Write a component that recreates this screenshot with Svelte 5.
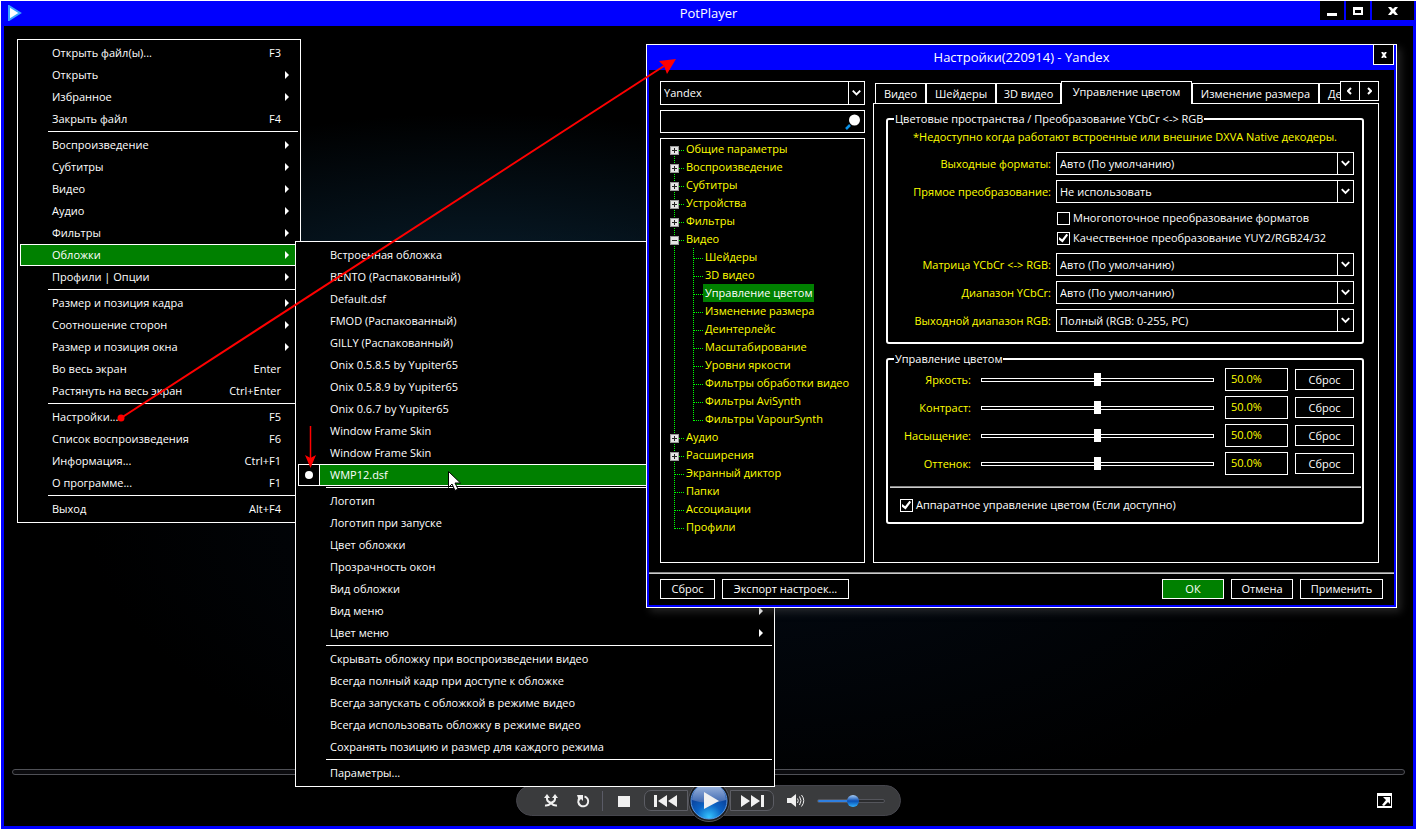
<script>
    const mainMenu = [
        { label: 'Открыть файл(ы)...', key: 'F3' },
        { label: 'Открыть', sub: true },
        { label: 'Избранное', sub: true },
        { label: 'Закрыть файл', key: 'F4' },
        { sep: true },
        { label: 'Воспроизведение', sub: true },
        { label: 'Субтитры', sub: true },
        { label: 'Видео', sub: true },
        { label: 'Аудио', sub: true },
        { label: 'Фильтры', sub: true },
        { label: 'Обложки', sub: true, active: true },
        { label: 'Профили | Опции', sub: true },
        { sep: true },
        { label: 'Размер и позиция кадра', sub: true },
        { label: 'Соотношение сторон', sub: true },
        { label: 'Размер и позиция окна', sub: true },
        { label: 'Во весь экран', key: 'Enter' },
        { label: 'Растянуть на весь экран', key: 'Ctrl+Enter' },
        { sep: true },
        { label: 'Настройки...', key: 'F5' },
        { label: 'Список воспроизведения', key: 'F6' },
        { label: 'Информация...', key: 'Ctrl+F1' },
        { label: 'О программе...', key: 'F1' },
        { sep: true },
        { label: 'Выход', key: 'Alt+F4' }
    ];

    const skinMenu = [
        { label: 'Встроенная обложка' },
        { label: 'BENTO (Распакованный)' },
        { label: 'Default.dsf' },
        { label: 'FMOD (Распакованный)' },
        { label: 'GILLY (Распакованный)' },
        { label: 'Onix 0.5.8.5 by Yupiter65' },
        { label: 'Onix 0.5.8.9 by Yupiter65' },
        { label: 'Onix 0.6.7 by Yupiter65' },
        { label: 'Window Frame Skin' },
        { label: 'Window Frame Skin' },
        { label: 'WMP12.dsf', active: true, checked: true },
        { sep: true },
        { label: 'Логотип', sub: true },
        { label: 'Логотип при запуске', sub: true },
        { label: 'Цвет обложки', sub: true },
        { label: 'Прозрачность окон', sub: true },
        { label: 'Вид обложки', sub: true },
        { label: 'Вид меню', sub: true },
        { label: 'Цвет меню', sub: true },
        { sep: true },
        { label: 'Скрывать обложку при воспроизведении видео' },
        { label: 'Всегда полный кадр при доступе к обложке' },
        { label: 'Всегда запускать с обложкой в режиме видео' },
        { label: 'Всегда использовать обложку в режиме видео' },
        { label: 'Сохранять позицию и размер для каждого режима' },
        { sep: true },
        { label: 'Параметры...' }
    ];

    const tree = [
        { label: 'Общие параметры', box: '+', first: true },
        { label: 'Воспроизведение', box: '+' },
        { label: 'Субтитры', box: '+' },
        { label: 'Устройства', box: '+' },
        { label: 'Фильтры', box: '+' },
        { label: 'Видео', box: '-' },
        { label: 'Шейдеры', child: true },
        { label: '3D видео', child: true },
        { label: 'Управление цветом', child: true },
        { label: 'Изменение размера', child: true },
        { label: 'Деинтерлейс', child: true },
        { label: 'Масштабирование', child: true },
        { label: 'Уровни яркости', child: true },
        { label: 'Фильтры обработки видео', child: true },
        { label: 'Фильтры AviSynth', child: true },
        { label: 'Фильтры VapourSynth', child: true, last: true },
        { label: 'Аудио', box: '+' },
        { label: 'Расширения', box: '+' },
        { label: 'Экранный диктор' },
        { label: 'Папки' },
        { label: 'Ассоциации' },
        { label: 'Профили', last: true }
    ];

    const tabs = ['Видео', 'Шейдеры', '3D видео', 'Управление цветом', 'Изменение размера', 'Деинтерлейс'];
    let activeTab = $state('Управление цветом');

    let sliders = $state([
        { id: 'brightness', label: 'Яркость:', value: 50 },
        { id: 'contrast', label: 'Контраст:', value: 50 },
        { id: 'saturation', label: 'Насыщение:', value: 50 },
        { id: 'hue', label: 'Оттенок:', value: 50 }
    ]);
</script>

{#snippet menuItems(items)}
    {#each items as item}
        {#if item.sep}
            <li class="sep" role="separator"></li>
        {:else}
            <li>
                <button class="item" class:active={item.active}>
                    <span class="mark" class:checked={item.checked}></span>
                    <span class="label">{item.label}</span>
                    {#if item.key}<span class="key">{item.key}</span>{/if}
                    {#if item.sub}<svg class="more" viewBox="0 0 4 8"><path d="M0 0L4 4L0 8Z" /></svg>{/if}
                </button>
            </li>
        {/if}
    {/each}
{/snippet}

{#snippet dropdown(id, value)}
    <div class="select">
        <select {id} aria-label={value}><option>{value}</option></select>
        <svg viewBox="0 0 16 21"><path d="M4 8L8 12L12 8" /></svg>
    </div>
{/snippet}

<div class="player">
    <header class="titlebar">
        <svg class="logo" viewBox="0 0 14 16"><path d="M1 1L12 8L1 15Z" /></svg>
        <h1>PotPlayer</h1>
        <div class="window-buttons">
            <button aria-label="Свернуть"><svg viewBox="0 0 12 12"><path d="M1 8H11V11H1Z" /></svg></button>
            <button aria-label="Развернуть"><svg viewBox="0 0 12 12"><path fill-rule="evenodd" d="M1 2H11V10H1ZM3 5V8H9V5Z" /></svg></button>
            <button class="wide" aria-label="Закрыть"><svg viewBox="0 0 12 12"><path d="M1 2H4L6 4L8 2H11L8 6L11 10H8L6 8L4 10H1L4 6Z" /></svg></button>
        </div>
    </header>

    <main class="screen"></main>

    <footer>
        <div class="seek"></div>
        <div class="controls">
            <div class="pill">
                <button aria-label="Случайный порядок">
                    <svg width="14" height="13" viewBox="0 0 14 13"><path class="stroke" d="M3 3V5C3 8 6 8 7 9S9 12 13 11.5M11 3V5C11 8 8 8 7 9S5 12 1 11.5" /><path d="M0 4L3 0L6 4ZM8 4L11 0L14 4Z" /></svg>
                </button>
                <button aria-label="Повтор">
                    <svg width="14" height="14" viewBox="0 0 14 14"><path class="stroke" d="M8.5 2.5A5 5 0 1 1 3.5 4" /><path d="M1 1H7V7L5 5L3 7Z" /></svg>
                </button>
                <span class="divider"></span>
                <button class="stop" aria-label="Стоп">
                    <svg width="12" height="12" viewBox="0 0 12 12"><path d="M0 1H12V12H0Z" /></svg>
                </button>
                <button class="skip prev" aria-label="Назад">
                    <svg width="24" height="12" viewBox="0 0 24 12"><path d="M0 0H3V12H0ZM13 0V12L4 6ZM23 0V12L14 6Z" /></svg>
                </button>
                <button class="play" aria-label="Воспроизвести">
                    <svg width="42" height="42" viewBox="0 0 42 42">
                        <defs>
                            <radialGradient id="orb" cx="50%" cy="95%" r="80%">
                                <stop offset="0" stop-color="#35c5ff" />
                                <stop offset=".45" stop-color="#0b63c4" />
                                <stop offset="1" stop-color="#0a3288" />
                            </radialGradient>
                            <linearGradient id="gloss" x2="0" y2="1">
                                <stop offset="0" stop-color="#a9bfe2" />
                                <stop offset="1" stop-color="#3b66b0" />
                            </linearGradient>
                        </defs>
                        <circle cx="21" cy="21" r="20.5" fill="#191a1d" stroke="#55565c" />
                        <circle cx="21" cy="21" r="18" fill="url(#orb)" stroke="#5e9be6" />
                        <path d="M4 20A17 17 0 0 1 38 20Q21 26 4 20Z" fill="url(#gloss)" />
                        <path d="M16 12L31 21L16 29Z" />
                    </svg>
                </button>
                <button class="skip next" aria-label="Вперёд">
                    <svg width="24" height="12" viewBox="0 0 24 12"><path d="M24 0H21V12H24ZM11 0V12L20 6ZM1 0V12L10 6Z" /></svg>
                </button>
                <button class="sound" aria-label="Звук">
                    <svg width="18" height="14" viewBox="0 0 18 14"><path d="M0 4H4L9 0V13L4 9H0Z" /><path class="stroke" d="M10.5 4.5Q12 6.5 10.5 9M12.5 2.5Q15.5 6.5 12.5 11M14.5 1Q19 6.5 14.5 12.5" /></svg>
                </button>
                <input class="volume" type="range" aria-label="Громкость" value="53" />
            </div>
            <button class="popout" aria-label="Переключить режим">
                <svg width="15" height="15" viewBox="0 0 15 15"><path fill-rule="evenodd" d="M0 0H15V15H0ZM1 3V13H14V3Z" /><path d="M6 4H13V11L11 9L7 13L5 12L9 7Z" /></svg>
            </button>
        </div>
    </footer>

    <ul class="menu main-menu">{@render menuItems(mainMenu)}</ul>
    <ul class="menu skin-menu">{@render menuItems(skinMenu)}</ul>

    <section class="dialog">
        <header>
            <h2>Настройки(220914) - Yandex</h2>
            <button class="close" aria-label="Закрыть настройки"><svg viewBox="0 0 6 6"><path d="M1 0L5 6M5 0L1 6" /></svg></button>
        </header>

        <div class="body">
            <aside>
                {@render dropdown('profile', 'Yandex')}
                <div class="search">
                    <input type="text" aria-label="Поиск" />
                    <svg width="16" height="16" viewBox="0 0 16 16"><path d="M1 15L5 11" stroke="#0a92e8" stroke-width="2.5" /><circle cx="9.5" cy="6" r="5.5" fill="#fff" /></svg>
                </div>
                <ul class="tree">
                    {#each tree as node}
                        <li>
                            <svg class="branch" width={node.child ? 42 : 23} height="18">
                                <path d="M13.5 {node.first ? 10 : 0}V{node.last && !node.child ? 11 : 18}" />
                                {#if node.child}
                                    <path d="M32.5 0V{node.last ? 11 : 18}M33 10.5H42" />
                                {:else}
                                    <path d="M14 10.5H23" />
                                {/if}
                                {#if node.box}
                                    <rect x="9.5" y="6.5" width="8" height="8" />
                                    <path class="sign" d={node.box === '+' ? 'M11 10.5H16M13.5 8V13' : 'M11 10.5H16'} />
                                {/if}
                            </svg>
                            <span class:selected={node.label === activeTab}>{node.label}</span>
                        </li>
                    {/each}
                </ul>
            </aside>

            <div class="page">
                <div class="tabs">
                    {#each tabs as tab}
                        <button class="tab" class:current={tab === activeTab} onclick={() => (activeTab = tab)}>{tab}</button>
                    {/each}
                    <div class="scroll">
                        <button aria-label="Предыдущие вкладки"><svg viewBox="0 0 6 8"><path d="M4 1L1 4L4 7" /></svg></button>
                        <button aria-label="Следующие вкладки"><svg viewBox="0 0 6 8"><path d="M2 1L5 4L2 7" /></svg></button>
                    </div>
                </div>

                <div class="panel">
                    <fieldset>
                        <legend>Цветовые пространства / Преобразование YCbCr &lt;-&gt; RGB</legend>
                        <p class="note">*Недоступно когда работают встроенные или внешние DXVA Native декодеры.</p>
                        <div class="form">
                            <label for="output">Выходные форматы:</label>
                            {@render dropdown('output', 'Авто (По умолчанию)')}
                            <label for="direct">Прямое преобразование:</label>
                            {@render dropdown('direct', 'Не использовать')}
                            <div class="checks">
                                <label class="check"><input type="checkbox" />Многопоточное преобразование форматов</label>
                                <label class="check"><input type="checkbox" checked />Качественное преобразование YUY2/RGB24/32</label>
                            </div>
                            <label for="matrix">Матрица YCbCr &lt;-&gt; RGB:</label>
                            {@render dropdown('matrix', 'Авто (По умолчанию)')}
                            <label for="range">Диапазон YCbCr:</label>
                            {@render dropdown('range', 'Авто (По умолчанию)')}
                            <label for="rgb">Выходной диапазон RGB:</label>
                            {@render dropdown('rgb', 'Полный (RGB: 0-255, PC)')}
                        </div>
                    </fieldset>

                    <fieldset>
                        <legend>Управление цветом</legend>
                        <div class="sliders">
                            {#each sliders as s}
                                <div class="slider">
                                    <label for={s.id}>{s.label}</label>
                                    <input type="range" id={s.id} bind:value={s.value} />
                                    <input type="text" aria-label={s.label} value="{s.value.toFixed(1)}%" />
                                    <button class="btn" onclick={() => (s.value = 50)}>Сброс</button>
                                </div>
                            {/each}
                        </div>
                        <hr />
                        <label class="check hardware"><input type="checkbox" checked />Аппаратное управление цветом (Если доступно)</label>
                    </fieldset>
                </div>
            </div>
        </div>

        <footer class="actions">
            <button class="btn reset">Сброс</button>
            <button class="btn export">Экспорт настроек...</button>
            <span class="spacer"></span>
            <button class="btn ok">ОК</button>
            <button class="btn">Отмена</button>
            <button class="btn apply">Применить</button>
        </footer>
    </section>

    <svg class="overlay" width="700" height="500" viewBox="0 0 700 500">
        <g class="arrows">
            <circle cx="121" cy="418" r="3.5" />
            <path d="M121 418L664 66" stroke="#f00" stroke-width="2" />
            <path d="M676 59L667 74L664 66L659 61Z" />
            <path d="M310.5 426V462" stroke="#f00" stroke-width="1.5" />
            <path d="M310.5 468L305 455L310.5 458L316 455Z" />
        </g>
        <path class="cursor" d="M448.5 471.5V487.5L452 484L455 490.5L458 489L455 483H460.5Z" />
    </svg>
</div>

<style>
:global(body) {
    background: #000;
}

.player {
    --line: #fff;
    --blue: #00f;
    --green: #008000;
    position: relative;
    display: flex;
    flex-direction: column;
    box-sizing: border-box;
    min-height: 100vh;
    border: 1px solid var(--line);
    background: #000;
    color: #fff;
    font: 11px/16px "Open Sans", "Noto Sans", sans-serif;
    overflow: hidden;
}

.player * {
    box-sizing: border-box;
}

button, input, select {
    margin: 0;
    padding: 0;
    border: 0;
    border-radius: 0;
    outline: 0;
    background: none;
    color: inherit;
    font: inherit;
}

svg {
    display: block;
    flex: none;
    fill: #fff;
}

ul, h1, h2, p {
    margin: 0;
    padding: 0;
    list-style: none;
    font-weight: normal;
}

/* player window */

.titlebar {
    display: grid;
    grid-template-columns: 1fr auto 1fr;
    height: 25px;
    padding: 0 2px;
    background: var(--blue);
}

.logo {
    width: 14px;
    height: 16px;
    margin: 4px 0 0 5px;
    stroke: #39a5ff;
    stroke-width: 2;
}

h1, h2 {
    font-size: 13px;
    line-height: 24px;
    text-align: center;
}

.window-buttons {
    display: flex;
    justify-content: flex-end;
    gap: 2px;
}

.window-buttons button {
    display: grid;
    place-items: center;
    width: 24px;
    height: 19px;
    background: #000;
}

.window-buttons .wide {
    width: 42px;
}

.window-buttons svg {
    width: 12px;
    height: 12px;
}

.screen {
    flex: 1;
    border: solid var(--blue);
    border-width: 0 3px;
    background:
        radial-gradient(ellipse 520px 210px at 34% 40%, #0a2436, transparent),
        radial-gradient(ellipse 650px 300px at 52% 66%, #030a14, #000);
}

.player > footer {
    padding-bottom: 10px;
    border: solid var(--blue);
    border-width: 0 3px 3px;
}

.seek {
    height: 6px;
    margin: 0 8px 10px;
    border: 1px solid #4f5056;
    border-radius: 3px;
    background: #0b0b0e;
}

.controls {
    display: grid;
    grid-template-columns: 1fr auto 1fr;
    align-items: center;
}

.pill {
    grid-column: 2;
    display: flex;
    align-items: center;
    height: 31px;
    padding: 0 15px 0 18px;
    border: 1px solid #45454c;
    border-radius: 16px;
    background: #3a3b3d;
}

.pill button {
    display: grid;
    place-items: center;
    width: 32px;
}

.pill svg {
    fill: #f0f0f0;
}

.pill .stroke {
    fill: none;
    stroke: #f0f0f0;
    stroke-width: 2;
}

.pill .sound .stroke {
    stroke-width: 1;
}

.divider {
    width: 1px;
    height: 20px;
    margin: 0 1px 0 3px;
    background: #5a5b66;
}

.pill .stop {
    width: 40px;
}

.pill .skip {
    width: 44px;
    height: 21px;
    border: 1px solid #5c5d64;
    background: #333436;
}

.pill .prev {
    border-radius: 7px 0 0 7px;
}

.pill .next {
    border-radius: 0 7px 7px 0;
}

.pill .play {
    width: 42px;
    margin: -6px 0;
}

.pill .sound {
    width: 43px;
}

.volume {
    appearance: none;
    width: 68px;
    height: 12px;
}

.volume::-webkit-slider-runnable-track {
    height: 4px;
    border: 1px solid #55565c;
    border-radius: 2px;
    background: linear-gradient(90deg, #2f7fe0 53%, #2b2c2e 53%);
}

.volume::-webkit-slider-thumb {
    appearance: none;
    width: 12px;
    height: 12px;
    margin-top: -5px;
    border-radius: 50%;
    background: linear-gradient(#a8cdf5, #0a4fb4 50%, #2fb1ff);
}

.popout {
    justify-self: end;
    margin-right: 21px;
}

/* menus */

.menu {
    position: absolute;
    padding: 2px;
    border: 1px solid var(--line);
    background: #000;
}

.main-menu {
    left: 16px;
    top: 38px;
    width: 284px;
}

.skin-menu {
    left: 294px;
    top: 240px;
    width: 480px;
}

.item {
    display: flex;
    align-items: center;
    width: 100%;
    height: 22px;
    padding-right: 8px;
    border: 1px solid transparent;
    text-align: left;
}

.item.active {
    border-color: var(--line);
    background: var(--green);
}

.mark {
    width: 21px;
    height: 20px;
    margin-right: 10px;
}

.mark.checked {
    display: grid;
    place-items: center;
    border-right: 1px solid var(--line);
    background: #000;
}

.mark.checked::before {
    content: '';
    width: 8px;
    height: 8px;
    border-radius: 50%;
    background: #fff;
}

.label {
    flex: 1;
}

.key {
    padding-right: 8px;
}

.more {
    width: 4px;
    height: 8px;
}

.sep {
    height: 4px;
    margin-left: 28px;
    padding-top: 1px;
}

.sep::before {
    content: '';
    display: block;
    height: 1px;
    background: var(--line);
}

/* settings dialog */

.dialog {
    position: absolute;
    left: 645px;
    top: 43px;
    width: 751px;
    border: 1px solid var(--line);
    background: #000;
    box-shadow: 4px 4px 8px rgba(90, 90, 90, .4);
}

.dialog > header {
    display: grid;
    grid-template-columns: 1fr auto 1fr;
    height: 25px;
    padding: 0 2px;
    background: var(--blue);
}

h2 {
    grid-column: 2;
}

.close {
    display: grid;
    place-items: center;
    justify-self: end;
    width: 21px;
    height: 21px;
    margin-top: -1px;
    border: 1px solid var(--line);
    background: #000;
}

.close svg {
    width: 6px;
    height: 6px;
    stroke: #fff;
    stroke-width: 2;
}

.body {
    display: flex;
    gap: 8px;
    padding: 11px 15px 9px 11px;
    border: solid var(--blue);
    border-width: 0 2px;
}

aside {
    display: flex;
    flex-direction: column;
    gap: 5px;
    width: 205px;
}

.select, .search {
    position: relative;
    height: 24px;
    border: 1px solid var(--line);
}

.search, .page .select {
    height: 23px;
}

.select select {
    appearance: none;
    width: 100%;
    height: 100%;
    padding-left: 3px;
}

option {
    background: #000;
}

.select svg {
    position: absolute;
    top: 0;
    right: 0;
    width: 16px;
    height: 100%;
    border-left: 1px solid var(--line);
    fill: none;
    stroke: #fff;
    stroke-width: 2;
    pointer-events: none;
}

.search input {
    width: 100%;
    height: 100%;
    padding: 0 24px 0 4px;
}

.search svg {
    position: absolute;
    top: 3px;
    right: 3px;
}

.tree {
    flex: 1;
    padding-top: 1px;
    border: 1px solid var(--line);
    color: #ff0;
}

.tree li {
    display: flex;
    height: 18px;
}

.tree span {
    padding: 0 2px;
    line-height: 18px;
    white-space: nowrap;
}

.tree .selected {
    background: var(--green);
    color: #fff;
}

.branch path {
    stroke: #0f0;
    stroke-dasharray: 1 1;
}

.branch rect {
    fill: #e4e4e4;
    stroke: #999;
}

.branch .sign {
    stroke: #222;
    stroke-dasharray: none;
}

.page {
    flex: 1;
    min-width: 0;
}

.tabs {
    display: grid;
    grid-template-columns: 51px 70px 65px 131px 127px 1fr auto;
    align-items: end;
    padding-left: 2px;
    height: 22px;
}

.tab {
    min-width: 0;
    height: 20px;
    border: 1px solid var(--line);
    border-bottom: 0;
    overflow: hidden;
    white-space: nowrap;
}

.tab:nth-child(6) {
    padding-left: 8px;
    border-right: 0;
    text-align: left;
}

.tab.current {
    height: 23px;
    margin-bottom: -1px;
    padding-bottom: 2px;
    background: #000;
    z-index: 1;
}

.scroll {
    display: flex;
    align-self: start;
    margin-left: -1px;
}

.scroll button {
    display: grid;
    place-items: center;
    width: 20px;
    height: 20px;
    border: 1px solid var(--line);
    background: #000;
}

.scroll button + button {
    margin-left: -1px;
}

.scroll svg {
    width: 6px;
    height: 8px;
    fill: none;
    stroke: #fff;
    stroke-width: 2;
}

.panel {
    display: flex;
    flex-direction: column;
    gap: 7px;
    padding: 7px 14px 38px 12px;
    border: 1px solid var(--line);
}

fieldset {
    min-width: 0;
    margin: 0;
    padding: 0;
    border: 2px solid var(--line);
    border-radius: 3px;
}

legend {
    margin-left: 6px;
    padding: 0 1px;
}

.note {
    padding-bottom: 5px;
    color: #ff0;
    line-height: 20px;
    text-align: center;
    white-space: nowrap;
}

.form {
    display: grid;
    grid-template-columns: 1fr 298px;
    align-items: center;
    gap: 5px;
    padding: 0 8px 10px 0;
}

.form > label, .slider label {
    color: #ff0;
    text-align: right;
    white-space: nowrap;
}

.checks {
    grid-column: 2;
}

.check {
    display: flex;
    align-items: center;
    gap: 3px;
    height: 20px;
    padding-left: 1px;
    white-space: nowrap;
}

.check input {
    appearance: none;
    display: grid;
    place-items: center;
    width: 13px;
    height: 13px;
    border: 1px solid var(--line);
}

.check input:checked::before {
    content: '';
    width: 9px;
    height: 9px;
    background: #fff;
    clip-path: polygon(0 40%, 35% 65%, 85% 0, 100% 20%, 40% 100%, 0 70%);
}

.sliders {
    display: grid;
    gap: 5px;
    padding-top: 1px;
}

.slider {
    display: flex;
    align-items: center;
    padding-right: 8px;
}

.slider label {
    width: 83px;
}

.slider input[type='range'] {
    appearance: none;
    flex: 1;
    min-width: 0;
    height: 13px;
    margin: 0 11px 0 10px;
}

.slider input::-webkit-slider-runnable-track {
    height: 4px;
    border: 1px solid var(--line);
}

.slider input::-webkit-slider-thumb {
    appearance: none;
    width: 7px;
    height: 13px;
    margin-top: -6px;
    background: #fff;
}

.slider input[type='text'] {
    width: 63px;
    height: 23px;
    padding: 0 0 2px 5px;
    border: 1px solid var(--line);
    color: #ff0;
}

.btn {
    width: 62px;
    height: 20px;
    border: 1px solid var(--line);
    white-space: nowrap;
}

.slider .btn {
    width: 59px;
    height: 21px;
    margin-left: 7px;
}

hr {
    height: 2px;
    margin: 11px 1px 0 2px;
    border: 0;
    border-top: 1px solid #888;
    background: #ccc;
}

.hardware {
    height: 34px;
    padding-left: 12px;
}

.actions {
    display: flex;
    gap: 7px;
    padding: 7px 11px 6px;
    border: solid var(--blue);
    border-width: 0 2px 2px;
    background: linear-gradient(#888 1px, #ccc 1px, #ccc 2px, transparent 2px);
}

.spacer {
    flex: 1;
}

.btn.reset {
    width: 55px;
}

.btn.export {
    width: 127px;
}

.btn.apply {
    width: 83px;
}

.btn.ok {
    background: var(--green);
}

.overlay {
    position: absolute;
    left: -1px;
    top: -1px;
    pointer-events: none;
}

.arrows {
    fill: #f00;
}

.cursor {
    fill: #fff;
    stroke: #000;
}
</style>
